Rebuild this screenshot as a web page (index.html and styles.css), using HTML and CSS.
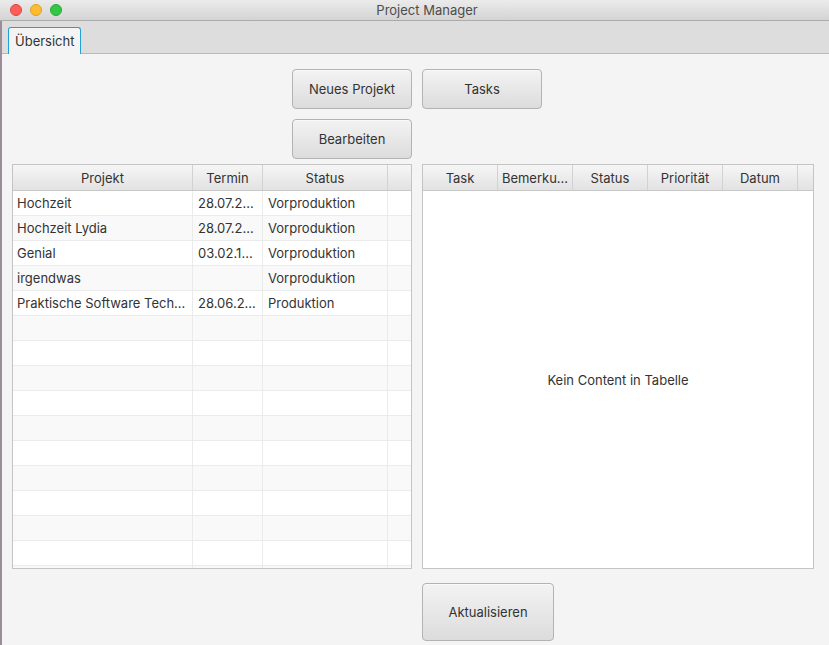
FILE: index.html
```html
<!DOCTYPE html>
<html>
<head>
<meta charset="utf-8">
<link rel="stylesheet" href="styles.css">
</head>
<body>
<div class="window">
  <div class="titlebar">
    <div class="lights">
      <span class="light red"></span>
      <span class="light yellow"></span>
      <span class="light green"></span>
    </div>
    <div class="title">Project Manager</div>
  </div>
  <div class="frame">
    <div class="tabbar">
      <div class="tab">Übersicht</div>
    </div>
    <div class="content">
      <button class="btn btn-left">Neues Projekt</button>
      <button class="btn btn-right">Tasks</button>
      <button class="btn btn-left row2">Bearbeiten</button>
      <div class="spacer row2"></div>

      <div class="table table-left">
        <div class="thead">
          <div class="th">Projekt</div>
          <div class="th">Termin</div>
          <div class="th">Status</div>
          <div class="th filler"></div>
        </div>
        <div class="tbody">
          <div class="tr"><div class="td">Hochzeit</div><div class="td">28.07.2...</div><div class="td">Vorproduktion</div><div class="td filler"></div></div>
          <div class="tr"><div class="td">Hochzeit Lydia</div><div class="td">28.07.2...</div><div class="td">Vorproduktion</div><div class="td filler"></div></div>
          <div class="tr"><div class="td">Genial</div><div class="td">03.02.1...</div><div class="td">Vorproduktion</div><div class="td filler"></div></div>
          <div class="tr"><div class="td">irgendwas</div><div class="td"></div><div class="td">Vorproduktion</div><div class="td filler"></div></div>
          <div class="tr"><div class="td">Praktische Software Tech...</div><div class="td">28.06.2...</div><div class="td">Produktion</div><div class="td filler"></div></div>
          <div class="tr"><div class="td"></div><div class="td"></div><div class="td"></div><div class="td filler"></div></div>
          <div class="tr"><div class="td"></div><div class="td"></div><div class="td"></div><div class="td filler"></div></div>
          <div class="tr"><div class="td"></div><div class="td"></div><div class="td"></div><div class="td filler"></div></div>
          <div class="tr"><div class="td"></div><div class="td"></div><div class="td"></div><div class="td filler"></div></div>
          <div class="tr"><div class="td"></div><div class="td"></div><div class="td"></div><div class="td filler"></div></div>
          <div class="tr"><div class="td"></div><div class="td"></div><div class="td"></div><div class="td filler"></div></div>
          <div class="tr"><div class="td"></div><div class="td"></div><div class="td"></div><div class="td filler"></div></div>
          <div class="tr"><div class="td"></div><div class="td"></div><div class="td"></div><div class="td filler"></div></div>
          <div class="tr"><div class="td"></div><div class="td"></div><div class="td"></div><div class="td filler"></div></div>
          <div class="tr"><div class="td"></div><div class="td"></div><div class="td"></div><div class="td filler"></div></div>
          <div class="tr"><div class="td"></div><div class="td"></div><div class="td"></div><div class="td filler"></div></div>
        </div>
      </div>

      <div class="table table-right">
        <div class="thead">
          <div class="th">Task</div>
          <div class="th">Bemerku...</div>
          <div class="th">Status</div>
          <div class="th">Priorität</div>
          <div class="th">Datum</div>
          <div class="th filler"></div>
        </div>
        <div class="tbody empty">
          <div class="placeholder">Kein Content in Tabelle</div>
        </div>
      </div>

      <div class="spacer row4"></div>
      <button class="btn btn-right big row4">Aktualisieren</button>
    </div>
  </div>
</div>
</body>
</html>
```

FILE: styles.css
```css
* { box-sizing: border-box; }

html, body {
  margin: 0;
  padding: 0;
  width: 829px;
  height: 645px;
  overflow: hidden;
  background: #f4f4f4;
  font-family: "Inter", "Liberation Sans", sans-serif;
  font-size: 13px;
  color: #333333;
}

.window {
  display: flex;
  flex-direction: column;
  height: 645px;
}

.titlebar {
  height: 21px;
  flex: none;
  display: flex;
  align-items: center;
  background: linear-gradient(#ebebeb, #d4d4d4);
  border-bottom: 1px solid #ababab;
  position: relative;
}

.lights {
  position: absolute;
  left: 10px;
  top: 4px;
  display: flex;
  gap: 8px;
}

.light {
  width: 12px;
  height: 12px;
  border-radius: 50%;
  display: block;
}
.red { background: #fc5f57; border: 1px solid #e0443e; }
.yellow { background: #fdbc2e; border: 1px solid #dea123; }
.green { background: #33c748; border: 1px solid #27aa35; }

.title {
  flex: 1;
  text-align: center;
  padding-left: 25px;
  color: #4d4d4d;
  font-size: 13px;
}

.frame {
  flex: 1;
  display: flex;
  flex-direction: column;
  border-left: 2px solid #9b8d97;
  min-height: 0;
}

.tabbar {
  height: 33px;
  flex: none;
  background: #dddddd;
  border-bottom: 1px solid #b9b9b9;
  display: flex;
  align-items: flex-end;
  padding-left: 6px;
}

.tab {
  height: 27px;
  width: 73px;
  margin-bottom: -1px;
  background: #f4f4f4;
  border: 1px solid #22a0d8;
  border-bottom: none;
  border-radius: 3px 3px 0 0;
  padding-left: 6px;
  padding-top: 5px;
  color: #333;
  font-size: 13px;
}

.content {
  flex: 1;
  display: grid;
  grid-template-columns: 400px 392px;
  grid-template-rows: 40px 50px 410px 72px;
  column-gap: 10px;
  padding-left: 10px;
  padding-top: 15px;
}

.btn {
  width: 120px;
  height: 40px;
  border: 1px solid #b3b3b3;
  border-radius: 4px;
  background: linear-gradient(#f3f3f3, #dcdcdc);
  font-family: "Inter", "Liberation Sans", sans-serif;
  font-size: 13px;
  color: #333333;
  padding: 0;
  box-shadow: 0 1px 0 rgba(255,255,255,0.6) inset;
}

.btn-left { justify-self: end; }
.btn-right { justify-self: start; }
.row2 { align-self: end; }
.row4 { align-self: end; }
.big { width: 132px; height: 58px; }

.table {
  align-self: end;
  height: 405px;
  border: 1px solid #c4c4c4;
  background: #ffffff;
  display: flex;
  flex-direction: column;
  overflow: hidden;
}

.thead {
  height: 26px;
  flex: none;
  display: grid;
  background: linear-gradient(#f6f6f6, #e2e2e2);
  border-bottom: 1px solid #c8c8c8;
}

.table-left .thead,
.table-left .tr {
  grid-template-columns: 180px 70px 125px 1fr;
}

.table-right .thead {
  grid-template-columns: 75px 75px 75px 75px 75px 1fr;
}

.th {
  border-right: 1px solid #d2d2d2;
  text-align: center;
  line-height: 25px;
  padding-top: 1px;
  white-space: nowrap;
  overflow: hidden;
}

.th.filler, .td.filler { border-right: none; }

.tbody {
  flex: 1;
  overflow: hidden;
}

.tr {
  display: grid;
  height: 25px;
  border-bottom: 1px solid #ebebeb;
  background: #ffffff;
}

.tr:nth-child(even) { background: #f9f9f9; }

.td {
  border-right: 1px solid #ebebeb;
  padding-left: 5px;
  line-height: 24px;
  white-space: nowrap;
  overflow: hidden;
}

.td:first-child { padding-left: 4px; }

.tbody.empty {
  display: flex;
  align-items: center;
  justify-content: center;
}

.placeholder {
  color: #333333;
}
```
